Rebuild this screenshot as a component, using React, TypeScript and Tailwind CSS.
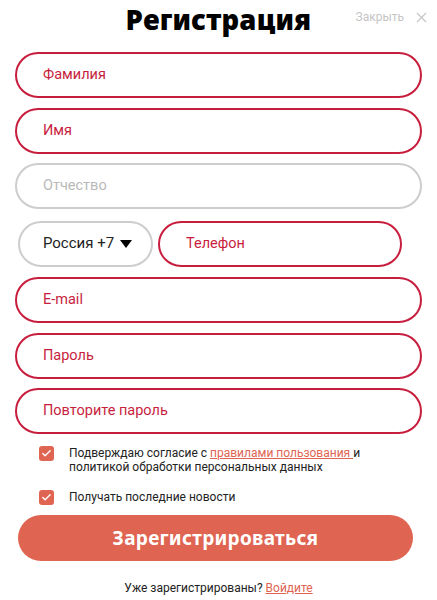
import { Check, X } from 'lucide-react'

const fields = [
    { label: 'Фамилия', tone: 'red' },
    { label: 'Имя', tone: 'red' },
    { label: 'Отчество', tone: 'gray' },
]

const lower = ['E-mail', 'Пароль', 'Повторите пароль']

function Field({ label, gray, className = '' }: { label: string, gray?: boolean, className?: string }) {
    return (
        <div
            className={
                'h-[46px] rounded-full border-2 flex items-center pl-[26px] text-[14.5px] ' +
                (gray ? 'border-[#cdcdcd] text-[#b9b9b9] ' : 'border-[#c81e3e] text-[#c81e3e] ') +
                className
            }
        >
            {label}
        </div>
    )
}

function Box() {
    return (
        <div className="w-[15px] h-[15px] shrink-0 rounded-[3px] bg-[#e06452] flex items-center justify-center">
            <Check className="w-[11px] h-[11px] text-white" strokeWidth={3} />
        </div>
    )
}

export default function App() {
    return (
        <div className="w-[437px] h-[600px] bg-white px-[15px] font-['Roboto',sans-serif] text-black">
            <header className="relative h-[40px] flex items-center justify-center">
                <h1 className="text-[27.5px] font-black tracking-[0.2px] font-['Noto_Sans',sans-serif] leading-none">Регистрация</h1>
                <div className="absolute right-[-8px] top-[8px] flex items-center gap-[9px] text-[#c4c4c4]">
                    <span className="text-[12px]">Закрыть</span>
                    <X className="w-[17px] h-[17px]" strokeWidth={1.5} />
                </div>
            </header>

            <div className="mt-[12px] flex flex-col gap-[9.5px]">
                {fields.map(f => (
                    <Field key={f.label} label={f.label} gray={f.tone === 'gray'} />
                ))}
                <div className="flex gap-[5px] pl-[3px] mt-[2px]">
                    <div className="w-[135px] h-[46px] rounded-full border-2 border-[#cdcdcd] flex items-center justify-center gap-[6px] text-[15px] text-[#222] pl-[4px]">
                        <span>Россия +7</span>
                        <span className="w-0 h-0 border-l-[6px] border-r-[6px] border-t-[8px] border-l-transparent border-r-transparent border-t-black" />
                    </div>
                    <Field label="Телефон" className="w-[244px]" />
                </div>
                <div className="flex flex-col gap-[9.5px] mt-[1px]">
                    {lower.map(l => <Field key={l} label={l} />)}
                </div>
            </div>

            <div className="mt-[12px] pl-[24px] text-[12px] leading-[13.5px] text-[#222]">
                <div className="flex gap-[15px]">
                    <Box />
                    <p className="pt-[1px]">
                        Подверждаю согласие с <a className="text-[#e06452] underline">правилами пользования </a>и<br />
                        политикой обработки персональных данных
                    </p>
                </div>
                <div className="flex gap-[15px] mt-[16px] items-center">
                    <Box />
                    <p>Получать последние новости</p>
                </div>
            </div>

            <button className="mt-[10px] ml-[3px] w-[395px] h-[46px] rounded-full bg-[#e06452] text-white text-[19px] font-bold font-['Noto_Sans',sans-serif] tracking-[0.3px]">
                Зарегистрироваться
            </button>

            <p className="mt-[18px] text-center text-[12px] text-[#222]">
                Уже зарегистрированы? <a className="text-[#e06452] underline">Войдите</a>
            </p>
        </div>
    )
}
